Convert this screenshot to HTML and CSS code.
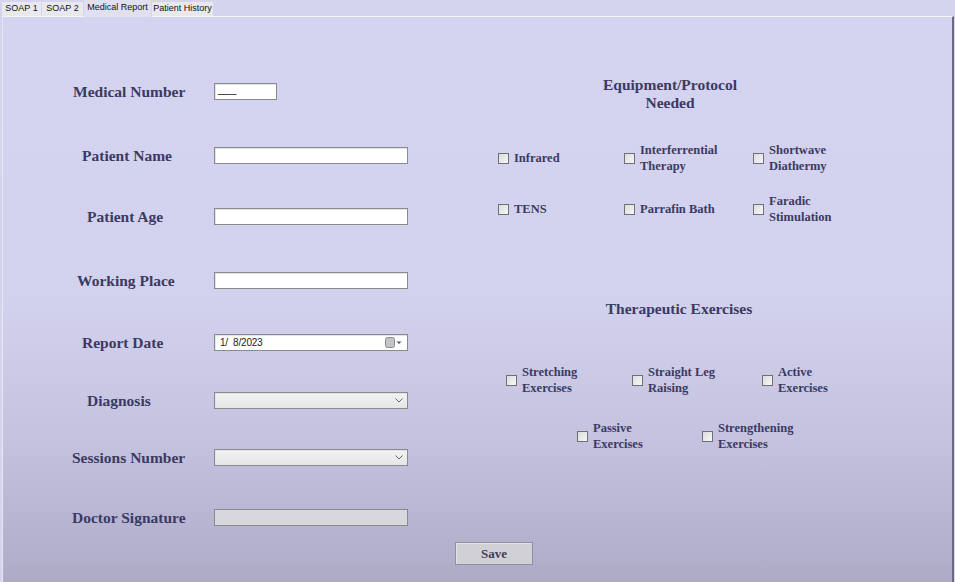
FILE: index.html
```html
<!DOCTYPE html>
<html>
<head>
<meta charset="utf-8">
<title>Medical Report</title>
<link rel="stylesheet" href="styles.css">
</head>
<body>
<div class="window">
  <div class="tabs">
    <div class="tab tab-s1">SOAP 1</div>
    <div class="tab tab-s2">SOAP 2</div>
    <div class="tab tab-active">Medical Report</div>
    <div class="tab tab-ph">Patient History</div>
  </div>
  <div class="panel">
    <div class="content">
      <div class="form">
        <div class="row">
          <div class="label lbl-1">Medical Number</div>
          <div class="textbox masked">___</div>
        </div>
        <div class="row">
          <div class="label lbl-2">Patient Name</div>
          <div class="textbox"></div>
        </div>
        <div class="row">
          <div class="label lbl-3">Patient Age</div>
          <div class="textbox"></div>
        </div>
        <div class="row">
          <div class="label lbl-4">Working Place</div>
          <div class="textbox"></div>
        </div>
        <div class="row">
          <div class="label lbl-5">Report Date</div>
          <div class="textbox datepicker">
            <span class="date-text">1/&nbsp; 8/2023</span>
            <svg class="cal" width="17" height="11" viewBox="0 0 17 11">
              <rect x="0.5" y="0.5" width="9" height="10" rx="2" fill="#c4c4c8" stroke="#8a8a8e"/>
              <path d="M11.5 4.5 L16.5 4.5 L14 7 Z" fill="#555"/>
            </svg>
          </div>
        </div>
        <div class="row">
          <div class="label lbl-6">Diagnosis</div>
          <div class="textbox combo">
            <svg class="chev" width="8" height="5" viewBox="0 0 8 5"><path d="M0.5 0.5 L4 4 L7.5 0.5" fill="none" stroke="#6a6a6a" stroke-width="1"/></svg>
          </div>
        </div>
        <div class="row">
          <div class="label lbl-7">Sessions Number</div>
          <div class="textbox combo">
            <svg class="chev" width="8" height="5" viewBox="0 0 8 5"><path d="M0.5 0.5 L4 4 L7.5 0.5" fill="none" stroke="#6a6a6a" stroke-width="1"/></svg>
          </div>
        </div>
        <div class="row">
          <div class="label lbl-8">Doctor Signature</div>
          <div class="textbox disabled"></div>
        </div>
      </div>

      <div class="right">
        <div class="heading">Equipment/Protocol<br>Needed</div>
        <div class="equip">
          <label class="check"><span class="box"></span><span class="ctext">Infrared</span></label>
          <label class="check"><span class="box"></span><span class="ctext">Interferrential<br>Therapy</span></label>
          <label class="check"><span class="box"></span><span class="ctext">Shortwave<br>Diathermy</span></label>
          <label class="check"><span class="box"></span><span class="ctext">TENS</span></label>
          <label class="check"><span class="box"></span><span class="ctext">Parrafin Bath</span></label>
          <label class="check"><span class="box"></span><span class="ctext">Faradic<br>Stimulation</span></label>
        </div>
        <div class="heading heading-ex">Therapeutic Exercises</div>
        <div class="ex-row ex-row-1">
          <label class="check ex-w1"><span class="box"></span><span class="ctext">Stretching<br>Exercises</span></label>
          <label class="check ex-w2"><span class="box"></span><span class="ctext">Straight Leg<br>Raising</span></label>
          <label class="check"><span class="box"></span><span class="ctext">Active<br>Exercises</span></label>
        </div>
        <div class="ex-row ex-row-2">
          <label class="check ex-w3"><span class="box"></span><span class="ctext">Passive<br>Exercises</span></label>
          <label class="check"><span class="box"></span><span class="ctext">Strengthening<br>Exercises</span></label>
        </div>
      </div>
    </div>
    <div class="actions">
      <button class="save">Save</button>
    </div>
  </div>
</div>
</body>
</html>
```

FILE: styles.css
```css
* { box-sizing: border-box; }

html, body {
  margin: 0;
  padding: 0;
}

body {
  width: 955px;
  height: 582px;
  overflow: hidden;
  background: #d5d3ee;
}

.window {
  width: 955px;
  height: 582px;
  display: flex;
  flex-direction: column;
}

/* ---------- tabs ---------- */
.tabs {
  height: 16px;
  display: flex;
  align-items: flex-end;
  padding-left: 2px;
  background: #d5d4ee;
  position: relative;
  z-index: 2;
}

.tab {
  height: 14px;
  font-family: "Liberation Sans", Arial, sans-serif;
  font-size: 9px;
  line-height: 13px;
  color: #111;
  text-align: center;
  background: #e9e9ed;
  border-right: 1px solid #d5d4ee;
}

.tab-s1 { width: 40px; }
.tab-s2 { width: 42px; }
.tab-ph { width: 62px; }

.tab-active {
  width: 68px;
  height: 17px;
  margin-bottom: -1px;
  line-height: 15px;
  background: #e1e0f3;
}

/* ---------- panel ---------- */
.panel {
  flex: 1;
  margin-left: 2px;
  margin-right: 1px;
  border-top: 1px solid #f3f3fa;
  border-left: 1px solid #e6e5f4;
  border-right: 2px solid #6c6880;
  background: linear-gradient(to bottom, #d4d3f0 0%, #d2d1ee 50%, #c4c2df 75%, #adabc6 100%);
  display: flex;
  flex-direction: column;
}

.content {
  display: flex;
}

/* ---------- left form ---------- */
.form {
  padding-top: 66px;
  display: grid;
  grid-template-columns: 211px 194px;
  grid-template-rows: 64px 61px 64px 62px 58px 57px 60px 17px;
}

.row {
  display: contents;
}

.label {
  height: 17px;
  display: flex;
  align-items: center;
  font-family: "Liberation Serif", "Times New Roman", serif;
  font-weight: bold;
  font-size: 15.5px;
  color: #3b3a62;
  white-space: nowrap;
}

.lbl-1 { padding-left: 70px; }
.lbl-2 { padding-left: 79px; }
.lbl-3 { padding-left: 84px; }
.lbl-4 { padding-left: 74px; }
.lbl-5 { padding-left: 79px; }
.lbl-6 { padding-left: 84px; }
.lbl-7 { padding-left: 69px; }
.lbl-8 { padding-left: 69px; }

.textbox {
  height: 17px;
  width: 194px;
  background: #ffffff;
  border: 1px solid #8a8a8e;
  box-shadow: inset 1px 1px 0 #e4e4e4;
  display: flex;
  align-items: center;
  font-family: "Liberation Sans", Arial, sans-serif;
  font-size: 10px;
  color: #222;
}

.masked {
  width: 63px;
  padding-left: 3px;
  font-size: 11px;
  line-height: 11px;
  align-items: flex-start;
  color: #111;
}

.datepicker {
  padding-left: 5px;
  justify-content: space-between;
  padding-right: 5px;
}

.date-text {
  letter-spacing: -0.2px;
}

.combo {
  background: linear-gradient(to bottom, #f2f2f2, #e6e6e6);
  justify-content: flex-end;
  padding-right: 4px;
}

.disabled {
  background: #d8d8dc;
  box-shadow: none;
}

/* ---------- right side ---------- */
.right {
  margin-left: 82px;
  width: 360px;
  padding-top: 59px;
  font-family: "Liberation Serif", "Times New Roman", serif;
  font-weight: bold;
  color: #3b3a62;
}

.heading {
  font-size: 15.5px;
  line-height: 18px;
  text-align: center;
}

.heading-ex {
  margin-top: 75px;
  padding-left: 18px;
}

.equip {
  margin-top: 30px;
  padding-left: 8px;
  display: grid;
  grid-template-columns: 126px 129px auto;
  grid-auto-rows: 32px;
  row-gap: 19px;
}

.check {
  display: flex;
  align-items: center;
  gap: 5px;
  height: 32px;
}

.box {
  width: 11px;
  height: 11px;
  flex: none;
  border: 1px solid #707074;
  background: linear-gradient(135deg, #dcdcdc, #f7f7f7);
}

.ctext {
  font-size: 12.5px;
  line-height: 16px;
  white-space: nowrap;
}

.ex-row {
  display: flex;
}

.ex-row-1 {
  margin-top: 46px;
  padding-left: 16px;
}

.ex-row-2 {
  margin-top: 24px;
  padding-left: 87px;
}

.ex-w1 { width: 126px; }
.ex-w2 { width: 130px; }
.ex-w3 { width: 125px; }

/* ---------- actions ---------- */
.actions {
  margin-top: 16px;
  padding-left: 452px;
}

.save {
  width: 78px;
  height: 23px;
  margin: 0;
  padding: 0;
  background: #d0d0d5;
  border: 1px solid #9090a0;
  box-shadow: inset 1px 1px 0 #e2e2e6;
  font-family: "Liberation Serif", "Times New Roman", serif;
  font-weight: bold;
  font-size: 13px;
  color: #3b3a62;
}
```
